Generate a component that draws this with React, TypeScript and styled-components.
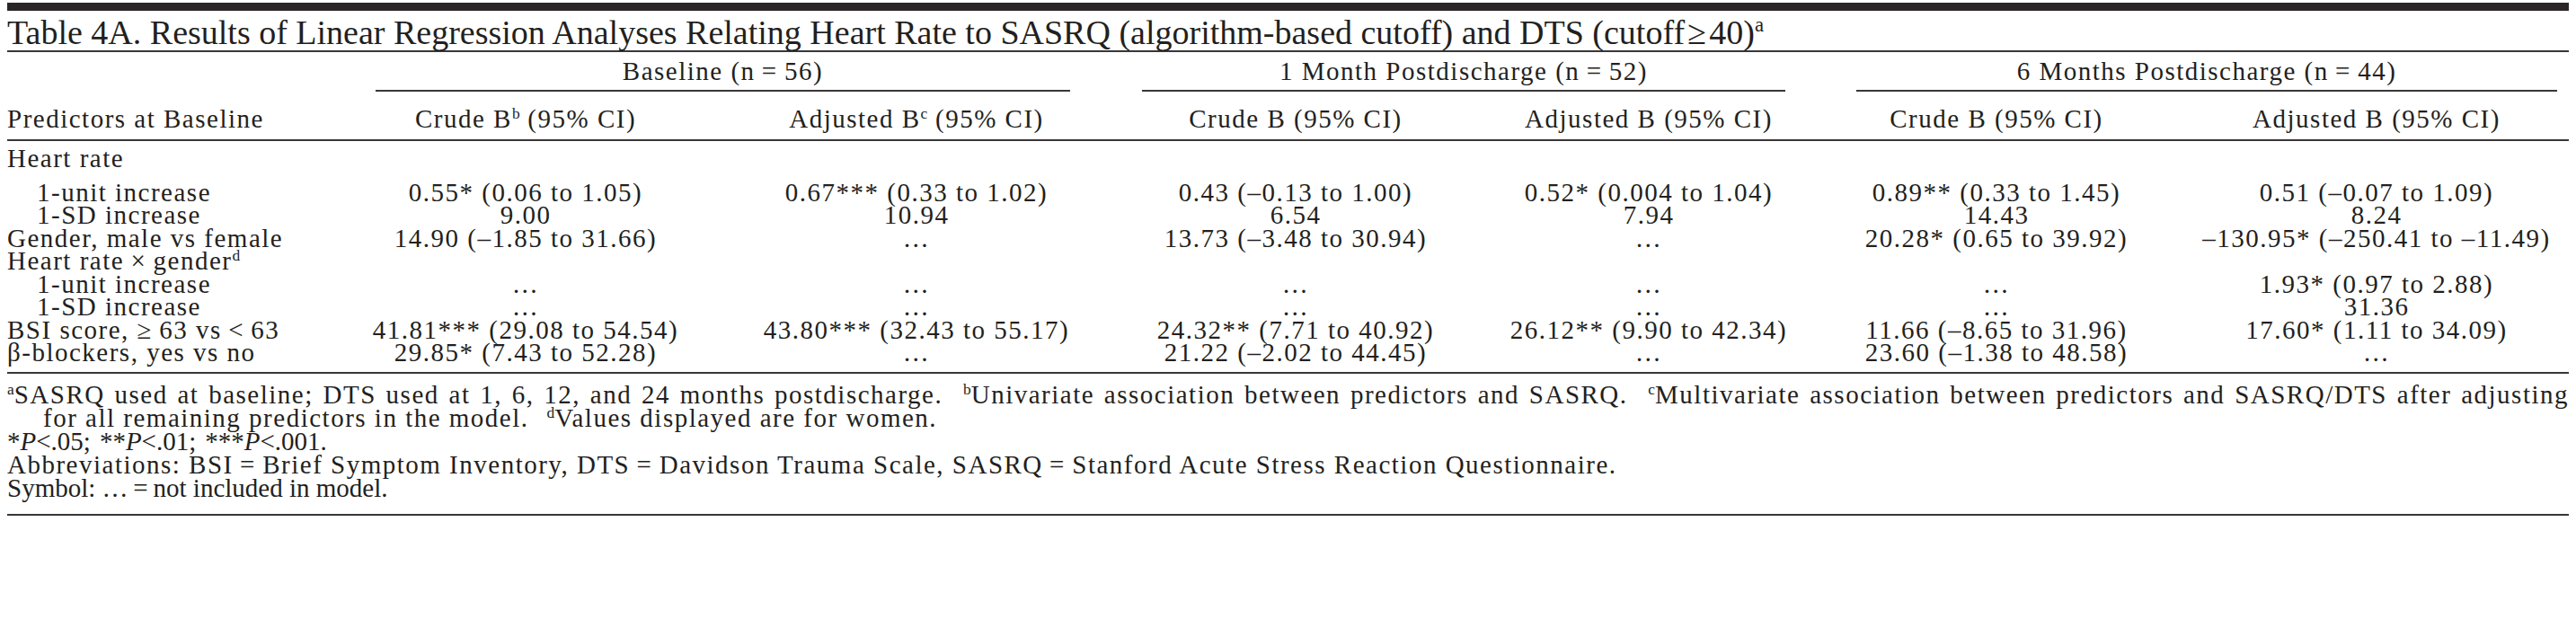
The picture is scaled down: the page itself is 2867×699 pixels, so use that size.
import React from 'react';
import styled, { createGlobalStyle } from 'styled-components';

const GlobalStyle = createGlobalStyle`
  html, body {
    margin: 0;
    background: #fff;
  }
  body {
    padding: 3px 8px 0;
    font-family: "Liberation Serif", "Times New Roman", serif;
    color: #231f20;
  }
`;

const Wrapper = styled.div`
  width: 100%;
`;
const TopBar = styled.div`
  height: 9px;
  background: #2a2627;
`;
const Title = styled.h1`
  margin: 4px 0 0;
  font-size: 38px;
  font-weight: normal;
  line-height: 40px;
  white-space: nowrap;
  border-bottom: 2px solid #3a3637;
`;
const Grid = styled.div`
  display: grid;
  grid-template-columns: 349px 456px 414px 430px 356px 418px 1fr;
  font-size: 29px;
  letter-spacing: 1.5px;
  line-height: 25.5px;
`;
const Rule = styled.div<{ $gap?: number }>`
  grid-column: 1 / -1;
  height: 2px;
  margin-top: ${p => p.$gap ?? 0}px;
  background: #3a3637;
`;
const Spacer = styled.div``;
const GroupHead = styled.div<{ $left: number; $right: number }>`
  grid-column: span 2;
  margin: 0 ${p => p.$right}px 0 ${p => p.$left}px;
  padding: 3px 0;
  line-height: 36px;
  text-align: center;
  border-bottom: 2px solid #3a3637;
  white-space: nowrap;
`;
const ColHead = styled.div<{ $align?: 'left' | 'center' }>`
  padding: 12px 0 5px;
  line-height: 36px;
  text-align: ${p => p.$align ?? 'center'};
  white-space: nowrap;
`;
const Label = styled.div<{ $indent?: boolean; $spaced?: boolean }>`
  padding: ${p => (p.$spaced ? '7px 0 12px' : '0')};
  padding-left: ${p => (p.$indent ? 33 : 0)}px;
  white-space: nowrap;
`;
const Value = styled.div<{ $spaced?: boolean }>`
  padding: ${p => (p.$spaced ? '7px 0 12px' : '0')};
  text-align: center;
  white-space: nowrap;
`;
const Sup = styled.sup`
  font-size: 60%;
  line-height: 0;
  letter-spacing: 0;
  vertical-align: 0.6em;
`;
const Notes = styled.div`
  padding: 10px 0 16px;
  font-size: 29px;
  line-height: 26px;
  border-bottom: 2px solid #3a3637;
`;
const NoteLine = styled.div<{ $indent?: boolean; $justify?: boolean; $tight?: boolean }>`
  padding-left: ${p => (p.$indent ? 40 : 0)}px;
  white-space: nowrap;
  text-align: ${p => (p.$justify ? 'justify' : 'left')};
  text-align-last: ${p => (p.$justify ? 'justify' : 'auto')};
  letter-spacing: ${p => (p.$tight ? 0 : 1.5)}px;
`;
const Note = styled.span<{ $gap?: number }>`
  margin-left: ${p => p.$gap ?? 0}px;
`;
const Italic = styled.i``;

const eq = '\u2009=\u2009';
const lt = '\u2009<\u2009';

const rows: { label: React.ReactNode; indent?: boolean; spaced?: boolean; values: string[] }[] = [
  { label: 'Heart rate', spaced: true, values: ['', '', '', '', '', ''] },
  {
    label: '1-unit increase',
    indent: true,
    values: [
      '0.55* (0.06 to 1.05)',
      '0.67*** (0.33 to 1.02)',
      '0.43 (–0.13 to 1.00)',
      '0.52* (0.004 to 1.04)',
      '0.89** (0.33 to 1.45)',
      '0.51 (–0.07 to 1.09)',
    ],
  },
  { label: '1-SD increase', indent: true, values: ['9.00', '10.94', '6.54', '7.94', '14.43', '8.24'] },
  {
    label: 'Gender, male vs female',
    values: [
      '14.90 (–1.85 to 31.66)',
      '…',
      '13.73 (–3.48 to 30.94)',
      '…',
      '20.28* (0.65 to 39.92)',
      '–130.95* (–250.41 to –11.49)',
    ],
  },
  {
    label: (
      <>
        Heart rate{'\u2009×\u2009'}gender<Sup>d</Sup>
      </>
    ),
    values: ['', '', '', '', '', ''],
  },
  { label: '1-unit increase', indent: true, values: ['…', '…', '…', '…', '…', '1.93* (0.97 to 2.88)'] },
  { label: '1-SD increase', indent: true, values: ['…', '…', '…', '…', '…', '31.36'] },
  {
    label: `BSI score, \u2265\u200963 vs${lt}63`,
    values: [
      '41.81*** (29.08 to 54.54)',
      '43.80*** (32.43 to 55.17)',
      '24.32** (7.71 to 40.92)',
      '26.12** (9.90 to 42.34)',
      '11.66 (–8.65 to 31.96)',
      '17.60* (1.11 to 34.09)',
    ],
  },
  {
    label: 'β-blockers, yes vs no',
    values: ['29.85* (7.43 to 52.28)', '…', '21.22 (–2.02 to 44.45)', '…', '23.60 (–1.38 to 48.58)', '…'],
  },
];

const groups = [
  { name: `Baseline (n${eq}56)`, left: 61, right: 36 },
  { name: `1 Month Postdischarge (n${eq}52)`, left: 44, right: 26 },
  { name: `6 Months Postdischarge (n${eq}44)`, left: 53, right: 13 },
];

export default function App() {
  return (
    <Wrapper>
      <GlobalStyle />
      <TopBar />
      <Title>
        Table 4A. Results of Linear Regression Analyses Relating Heart Rate to SASRQ (algorithm-based cutoff) and DTS
        (cutoff{'\u200a\u2265\u200a'}40)<Sup>a</Sup>
      </Title>
      <Grid>
        <Spacer />
        {groups.map(g => (
          <GroupHead key={g.name} $left={g.left} $right={g.right}>
            {g.name}
          </GroupHead>
        ))}
        <ColHead $align="left">Predictors at Baseline</ColHead>
        <ColHead>
          Crude B<Sup>b</Sup> (95% CI)
        </ColHead>
        <ColHead>
          Adjusted B<Sup>c</Sup> (95% CI)
        </ColHead>
        <ColHead>Crude B (95% CI)</ColHead>
        <ColHead>Adjusted B (95% CI)</ColHead>
        <ColHead>Crude B (95% CI)</ColHead>
        <ColHead>Adjusted B (95% CI)</ColHead>
        <Rule />
        {rows.map((r, i) => (
          <React.Fragment key={i}>
            <Label $indent={r.indent} $spaced={r.spaced}>
              {r.label}
            </Label>
            {r.values.map((v, j) => (
              <Value key={j} $spaced={r.spaced}>
                {v}
              </Value>
            ))}
          </React.Fragment>
        ))}
        <Rule $gap={8} />
      </Grid>
      <Notes>
        <NoteLine $justify>
          <Note>
            <Sup>a</Sup>SASRQ used at baseline; DTS used at 1, 6, 12, and 24 months postdischarge.
          </Note>{' '}
          <Note $gap={12}>
            <Sup>b</Sup>Univariate association between predictors and SASRQ.
          </Note>{' '}
          <Note $gap={12}>
            <Sup>c</Sup>Multivariate association between predictors and SASRQ/DTS after adjusting
          </Note>
        </NoteLine>
        <NoteLine $indent>
          <Note>for all remaining predictors in the model.</Note>
          <Note $gap={20}>
            <Sup>d</Sup>Values displayed are for women.
          </Note>
        </NoteLine>
        <NoteLine $tight>
          <Note>
            *<Italic>P</Italic>&lt;.05;
          </Note>
          <Note $gap={10}>
            **<Italic>P</Italic>&lt;.01;
          </Note>
          <Note $gap={10}>
            ***<Italic>P</Italic>&lt;.001.
          </Note>
        </NoteLine>
        <NoteLine>
          Abbreviations: BSI{eq}Brief Symptom Inventory, DTS{eq}Davidson Trauma Scale, SASRQ{eq}Stanford Acute Stress
          Reaction Questionnaire.
        </NoteLine>
        <NoteLine $tight>Symbol: …{eq}not included in model.</NoteLine>
      </Notes>
    </Wrapper>
  );
}
